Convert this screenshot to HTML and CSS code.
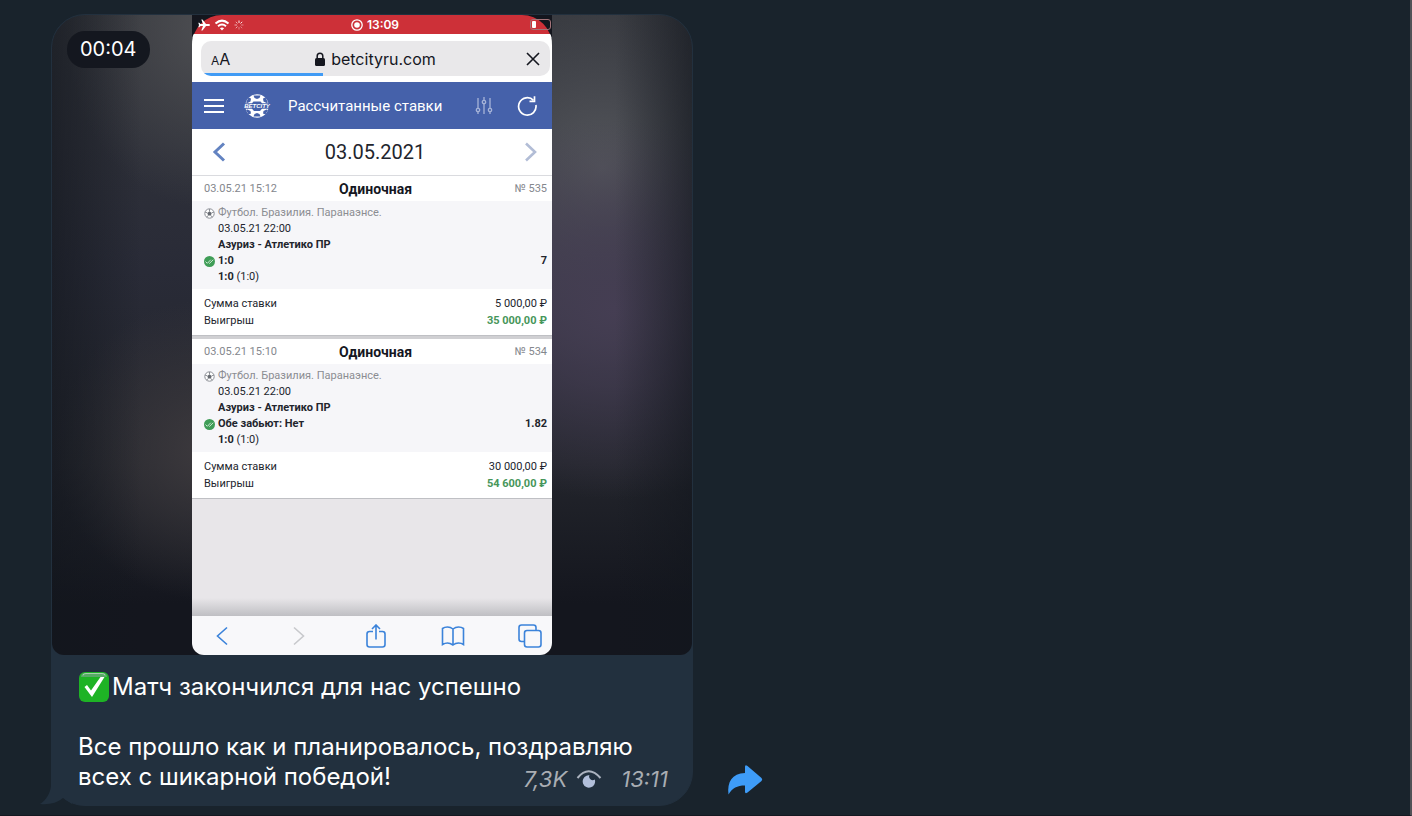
FILE: index.html
```html
<!DOCTYPE html>
<html lang="ru">
<head>
  <meta charset="UTF-8">
  <title>Канал</title>
  <meta name="viewport" content="width=device-width, initial-scale=1.0">
  <link rel="stylesheet" href="styles.css">
</head>
<body>
  <main class="chat">
    <article class="message">
      <svg class="tail" width="32" height="44" viewBox="0 0 32 44"><path d="M11 0V24C10 32 6 38 0 42C9 43 17 41 23 36C26 38 29 40 32 42V0Z"/></svg>

      <div class="media">
        <div class="duration">00:04</div>

        <div class="phone">
          <div class="status-bar">
            <div class="status-left">
              <svg width="12" height="12" viewBox="0 0 12 12" fill="#fff"><path d="M12 6C12 5.300 11.200 5 10.500 5H8L4.500.5H3.300L5 5H2.500L1.300 3.700H.3L1 6 .3 8.300H1.300L2.500 7H5L3.300 11.500H4.500L8 7H10.500C11.200 7 12 6.700 12 6Z"/></svg>
              <svg width="16" height="12" viewBox="0 0 16 12" fill="none" stroke="#fff" stroke-width="2"><path d="M1.500 4.500Q8-1.200 14.500 4.500M4 7.200Q8 3.800 12 7.200"/><path d="M8 11.500 5.900 9.300Q8 7.700 10.100 9.300Z" fill="#fff" stroke="none"/></svg>
              <svg width="10" height="10" viewBox="0 0 10 10" fill="none" stroke="#fff"><path d="M5 .5V3M8.200 1.800 6.500 3.500" opacity=".9"/><path d="M9.500 5H7M8.200 8.200 6.500 6.500M5 9.500V7" opacity=".4"/><path d="M1.800 8.200 3.500 6.500M.5 5H3M1.800 1.800 3.500 3.500" opacity=".6"/></svg>
            </div>
            <div class="status-time">
              <svg width="12" height="12" viewBox="0 0 12 12"><circle cx="6" cy="6" r="5.200" fill="none" stroke="#fff" stroke-width="1.300"/><circle cx="6" cy="6" r="2.800" fill="#fff"/></svg>
              <span>13:09</span>
            </div>
            <svg class="battery" width="22" height="11" viewBox="0 0 22 11"><rect x=".5" y=".5" width="20" height="10" rx="2.500" fill="none" stroke="#a37378"/><rect x="2" y="2" width="4" height="7" rx="1" fill="#fff"/></svg>
          </div>

          <div class="address">
            <div class="address-bar">
              <button class="text-size" aria-label="Размер текста"><small>A</small>A</button>
              <label class="url">
                <svg width="10" height="14" viewBox="0 0 10 14"><path d="M2.200 6V4a2.800 2.800 0 0 1 5.600 0V6" fill="none" stroke="#15171f" stroke-width="1.500"/><rect y="6" width="10" height="8" rx="1.500" fill="#15171f"/></svg>
                <input type="text" value="betcityru.com" aria-label="Адрес">
              </label>
              <button aria-label="Остановить"><svg width="14" height="14" viewBox="0 0 14 14" fill="none" stroke="#15171f" stroke-width="1.600"><path d="M1 1 13 13M13 1 1 13"/></svg></button>
              <div class="progress"></div>
            </div>
          </div>

          <header class="app-header">
            <button aria-label="Меню"><svg width="20" height="16" viewBox="0 0 20 16" stroke="#fff" stroke-width="2"><path d="M0 2H20M0 8H20M0 14H20"/></svg></button>
            <svg class="brand" width="28" height="24" viewBox="0 0 28 24">
              <circle cx="14" cy="12" r="11.700" fill="#fff"/>
              <g fill="#4561aa"><path d="M10.500 1.500H17.500L16.500 4 14 5 11.500 4Z"/><path d="M10.500 22.500H17.500L16.500 20 14 19 11.500 20Z"/><path d="M5.500 3.500 8 4.500 7.500 7.500 4.500 9 3 8.500Z"/><path d="M22.500 3.500 20 4.500 20.500 7.500 23.500 9 25 8.500Z"/><path d="M5.500 20.500 8 19.500 7.500 17 4.500 15.500 3 16Z"/><path d="M22.500 20.500 20 19.500 20.500 17 23.500 15.500 25 16Z"/><path d="M10.500 7.500H17.500L19 9.300H26V14.800H19L17 17H11L9 14.800H2V9.300H9Z"/></g>
              <text x="14" y="14.200" text-anchor="middle">BETCITY</text>
            </svg>
            <h1>Рассчитанные ставки</h1>
            <button aria-label="Фильтр"><svg width="18" height="18" viewBox="0 0 18 18" fill="none" stroke="#a7b4d8" stroke-width="1.300"><path d="M3 1V11M3 15V17M9 0V3M9 7V17M15 1V11M15 15V17"/><circle cx="3" cy="13" r="1.700"/><circle cx="9" cy="5" r="1.700"/><circle cx="15" cy="13" r="1.700"/></svg></button>
            <button aria-label="Обновить"><svg width="20" height="20" viewBox="0 0 20 20" fill="none" stroke="#fff" stroke-width="1.700"><path d="M16.500 4.300A8.700 8.700 0 1 0 18.900 9"/><path d="M12.500 5.300H17.500V.3"/></svg></button>
          </header>

          <div class="date-nav">
            <button aria-label="Предыдущий день"><svg width="14" height="20" viewBox="0 0 14 20" fill="none" stroke="#6383c1" stroke-width="3"><path d="M12 1.500 3 10 12 18.500"/></svg></button>
            <span>03.05.2021</span>
            <button aria-label="Следующий день"><svg width="14" height="20" viewBox="0 0 14 20" fill="none" stroke="#b2bdd6" stroke-width="2.600"><path d="M2 1.500 11 10 2 18.500"/></svg></button>
          </div>

          <section class="bet">
            <div class="bet-head">
              <time>03.05.21 15:12</time>
              <h2>Одиночная</h2>
              <span>№ 535</span>
            </div>
            <div class="bet-body">
              <svg width="11" height="11" viewBox="0 0 11 11"><circle cx="5.500" cy="5.500" r="4.700" fill="#fff" stroke="#8b8e95"/><path d="M5.500 3.300 7.700 4.900 6.900 7.400H4.100L3.300 4.900Z" fill="#666a71"/><path d="M5.500 3.300V1M7.700 4.900 10 4M6.900 7.400 8.300 9.300M4.100 7.400 2.700 9.300M3.300 4.900 1 4" stroke="#8b8e95"/></svg>
              <span class="league">Футбол. Бразилия. Паранаэнсе.</span>
              <span class="line">03.05.21 22:00</span>
              <b class="line">Азуриз - Атлетико ПР</b>
              <svg width="11" height="11" viewBox="0 0 11 11"><circle cx="5.500" cy="5.500" r="5.500" fill="#3f9d57"/><path d="M1.500 5.500 3.300 7.300 6.800 3.700M4.700 6.700 5.500 7.400 9.300 3.700" fill="none" stroke="#c8e6cf"/></svg>
              <b>1:0</b>
              <b class="odds">7</b>
              <span class="line"><b>1:0</b> (1:0)</span>
            </div>
            <dl class="sums">
              <dt>Сумма ставки</dt><dd>5 000,00 ₽</dd>
              <dt>Выигрыш</dt><dd class="win">35 000,00 ₽</dd>
            </dl>
          </section>

          <section class="bet">
            <div class="bet-head">
              <time>03.05.21 15:10</time>
              <h2>Одиночная</h2>
              <span>№ 534</span>
            </div>
            <div class="bet-body">
              <svg width="11" height="11" viewBox="0 0 11 11"><circle cx="5.500" cy="5.500" r="4.700" fill="#fff" stroke="#8b8e95"/><path d="M5.500 3.300 7.700 4.900 6.900 7.400H4.100L3.300 4.900Z" fill="#666a71"/><path d="M5.500 3.300V1M7.700 4.900 10 4M6.900 7.400 8.300 9.300M4.100 7.400 2.700 9.300M3.300 4.900 1 4" stroke="#8b8e95"/></svg>
              <span class="league">Футбол. Бразилия. Паранаэнсе.</span>
              <span class="line">03.05.21 22:00</span>
              <b class="line">Азуриз - Атлетико ПР</b>
              <svg width="11" height="11" viewBox="0 0 11 11"><circle cx="5.500" cy="5.500" r="5.500" fill="#3f9d57"/><path d="M1.500 5.500 3.300 7.300 6.800 3.700M4.700 6.700 5.500 7.400 9.300 3.700" fill="none" stroke="#c8e6cf"/></svg>
              <b>Обе забьют: Нет</b>
              <b class="odds">1.82</b>
              <span class="line"><b>1:0</b> (1:0)</span>
            </div>
            <dl class="sums">
              <dt>Сумма ставки</dt><dd>30 000,00 ₽</dd>
              <dt>Выигрыш</dt><dd class="win">54 600,00 ₽</dd>
            </dl>
          </section>

          <div class="page-end"></div>

          <nav class="toolbar">
            <button aria-label="Назад"><svg width="24" height="24" viewBox="0 0 24 24"><path d="M17 3.500 7.500 12 17 20.500"/></svg></button>
            <button aria-label="Вперёд" disabled><svg width="24" height="24" viewBox="0 0 24 24"><path d="M7 3.500 16.500 12 7 20.500"/></svg></button>
            <button aria-label="Поделиться"><svg width="24" height="24" viewBox="0 0 24 24"><path d="M9 7.500H5.500Q3 7.500 3 10V20.500Q3 23 5.500 23H18.500Q21 23 21 20.500V10Q21 7.500 18.500 7.500H15M12 15.500V1M8 5 12 1 16 5"/></svg></button>
            <button aria-label="Закладки"><svg width="24" height="24" viewBox="0 0 24 24"><path d="M12 5Q9.500 3 6.500 3T1.500 4.500V20.500Q4 19 6.500 19T12 21Q14.500 19 17.500 19T22.500 20.500V4.500Q20.500 3 17.500 3T12 5V21"/></svg></button>
            <button aria-label="Вкладки"><svg width="24" height="24" viewBox="0 0 24 24"><rect x="6.500" y="6.500" width="16.500" height="16.500" rx="2.500"/><path d="M6.500 17.500H3.500Q1 17.500 1 15V3.500Q1 1 3.500 1H15.500Q18 1 18 3.500V6.500"/></svg></button>
          </nav>
        </div>
      </div>

      <div class="caption">
        <p><svg class="check" width="32" height="32" viewBox="0 0 32 32"><rect x="1" y="1" width="30" height="30" rx="6" fill="#1eb325"/><path d="M3 6Q3 2 7 2H25Q29 2 29 6Z" fill="#58a967"/><path d="M5 4.500Q5 2.500 8 2.500H24Q27 2.500 27 4.500" fill="none" stroke="#a6cfac"/><path d="M6.500 16 9 14 13 19.500 22.500 6H26.500L14 26Z" fill="#fff"/></svg>Матч закончился для нас успешно</p>
        <p>Все прошло как и планировалось, поздравляю<br>всех с шикарной победой!</p>
        <div class="meta">
          <span>7,3K</span>
          <svg width="26" height="20" viewBox="0 0 26 20"><path d="M1.500 9Q12.500-4.500 24.500 9" fill="none" stroke="#acb3bf" stroke-width="2"/><path d="M10.500 6.700A6.200 6.200 0 1 0 18.800 10.500 3.600 3.600 0 0 1 13.500 6Z" fill="#b2bfda"/></svg>
          <time>13:11</time>
        </div>
      </div>
    </article>

    <button class="share" aria-label="Переслать"><svg width="36" height="32" viewBox="0 0 36 32"><path d="M1.500 30.500C0 18 5 9.500 18 9V3Q18 0 20.500 2L34.500 14Q36 15.500 34.500 17L20.500 28.500Q18 30.500 18 27.500V21.500C10 21.500 5.500 24 1.500 30.500Z" fill="#3e9cf8"/></svg></button>
  </main>
</body>
</html>
```
FILE: styles.css
```css
* {
  box-sizing: border-box;
}

body {
  margin: 0;
  min-height: 100vh;
  background: #19232c;
  border-right: 2px solid #515156;
  border-bottom: 1px solid #141821;
  font-family: Inter, "Liberation Sans", sans-serif;
  color: #fff;
}

button {
  background: none;
  border: none;
  padding: 0;
  color: inherit;
  font: inherit;
  display: flex;
  align-items: center;
  cursor: pointer;
}

svg {
  display: block;
  flex-shrink: 0;
}

.chat {
  display: flex;
  align-items: flex-end;
  gap: 34px;
  padding: 14px 0 9px 51px;
}

/* message bubble */
.message {
  position: relative;
  width: 642px;
  max-width: 100%;
  background: #22303e;
  border: 1px solid #22303e;
  border-radius: 34px;
}

.tail {
  position: absolute;
  left: -12px;
  bottom: -1px;
  fill: #22303e;
}

.media {
  position: relative;
  display: flex;
  justify-content: center;
  border-radius: 33px 33px 12px 12px;
  overflow: hidden;
  background:
    linear-gradient(90deg, rgba(18, 22, 29, 0.6) 0%, rgba(18, 22, 29, 0) 14%, rgba(18, 22, 29, 0) 88%, rgba(18, 22, 29, 0.6) 100%),
    radial-gradient(ellipse 220px 190px at 88% 46%, #453e53 0%, rgba(69, 62, 83, 0.7) 40%, rgba(69, 62, 83, 0) 100%),
    radial-gradient(ellipse 200px 200px at 86% 24%, #54565b 0%, rgba(84, 86, 91, 0.5) 50%, rgba(84, 86, 91, 0) 100%),
    radial-gradient(ellipse 140px 180px at 24% 2%, #4c4d51 0%, rgba(76, 77, 81, 0) 100%),
    radial-gradient(ellipse 150px 150px at 24% 68%, #3c393d 0%, rgba(60, 57, 61, 0) 100%),
    linear-gradient(#33353b 0%, #292b37 40%, #23252c 70%, #14161e 92%);
}

.duration {
  position: absolute;
  left: 15px;
  top: 16px;
  padding: 0 13px;
  border-radius: 18px;
  background: #14171f;
  font-size: 20px;
  line-height: 37px;
}

/* recorded phone screen */
.phone {
  display: flex;
  flex-direction: column;
  width: 360px;
  height: 640px;
  background: #14161e;
  border-radius: 0 0 12px 12px;
  overflow: hidden;
  font-family: Roboto, "Liberation Sans", sans-serif;
  font-size: 11px;
  color: #22252d;
}

.status-bar {
  position: relative;
  display: grid;
  grid-template-columns: 1fr auto 1fr;
  align-items: center;
  height: 19px;
  padding-left: 6px;
  overflow: hidden;
  color: #fff;
}

/* rounded top of the screen */
.status-bar::before {
  content: "";
  position: absolute;
  inset: 0 0 -20px 0;
  border-radius: 30px 30px 0 0;
  background: #cd3038;
}

.status-bar > * {
  position: relative;
}

.status-left,
.status-time {
  display: flex;
  align-items: center;
  gap: 4px;
}

.status-time {
  font-family: Inter, sans-serif;
  font-size: 12px;
  font-weight: 600;
}

.battery {
  justify-self: end;
}

.address {
  height: 48px;
  padding: 7px 2px 6px 9px;
  border-radius: 2px 2px 0 0 / 11px 11px 0 0;
  background: #fff;
}

.address-bar {
  position: relative;
  display: flex;
  align-items: center;
  justify-content: space-between;
  height: 35px;
  padding: 0 10px;
  border-radius: 10px;
  overflow: hidden;
  background: #e9e8ea;
  font-family: Inter, sans-serif;
  font-size: 16px;
  color: #15171f;
}

.text-size {
  align-items: baseline;
}

.text-size small {
  font-size: 12px;
}

.url {
  display: flex;
  align-items: center;
  gap: 6px;
}

.url input {
  width: 110px;
  padding: 0;
  border: none;
  background: none;
  color: inherit;
  font: inherit;
}

.progress {
  position: absolute;
  left: 0;
  bottom: 0;
  width: 35%;
  height: 3px;
  background: #409bf5;
}

.app-header {
  display: flex;
  align-items: center;
  height: 47px;
  padding: 0 15px 0 12px;
  background: #4561aa;
  color: #fff;
}

.app-header h1 {
  flex: 1;
  margin: 0 0 0 17px;
  font-size: 15px;
  font-weight: 400;
}

.brand {
  margin-left: 19px;
}

.brand text {
  font: italic 700 6px "Liberation Sans", sans-serif;
  fill: #fff;
}

.app-header button:last-child {
  margin-left: 24px;
}

.date-nav {
  display: flex;
  align-items: center;
  justify-content: space-between;
  height: 47px;
  padding: 0 14px 0 20px;
  background: #fff;
  border-bottom: 1px solid #dadbdf;
  font-size: 20px;
}

.bet {
  background: #fff;
  border-bottom: 1px solid #bfc0c4;
}

.bet + .bet {
  border-top: 3px solid #d0d0d3;
}

.bet-head {
  display: grid;
  grid-template-columns: 1fr auto 1fr;
  align-items: center;
  height: 25px;
  padding: 0 5px 0 12px;
  color: #84878d;
}

.bet-head h2 {
  margin: 0;
  font-size: 14px;
  font-weight: 700;
  line-height: 16px;
  color: #15171f;
}

.bet-head span {
  text-align: right;
}

.bet-body {
  display: grid;
  grid-template-columns: 11px 1fr auto;
  column-gap: 3px;
  align-items: center;
  padding: 4px 5px 4px 12px;
  background: #f6f6f9;
  line-height: 16px;
}

.league {
  grid-column: 2 / 4;
  color: #8b8d92;
}

.line {
  grid-column: 2 / 4;
}

.odds {
  text-align: right;
}

.sums {
  display: grid;
  grid-template-columns: 1fr auto;
  margin: 0;
  padding: 6px 5px 6px 12px;
  line-height: 17px;
}

.sums dd {
  margin: 0;
  text-align: right;
}

.sums .win {
  color: #47965a;
  font-weight: 700;
}

.page-end {
  flex: 1;
  background: linear-gradient(rgba(190, 190, 194, 0), #bfbfc3) bottom / 100% 18px no-repeat, #e8e6e9;
}

.toolbar {
  display: flex;
  align-items: center;
  justify-content: space-between;
  height: 39px;
  padding: 0 10px 0 18px;
  background: #f8f8fa;
}

.toolbar svg {
  fill: none;
  stroke: #3b83da;
  stroke-width: 1.6;
}

.toolbar button:disabled svg {
  stroke: #c8c9cc;
}

/* text under the video */
.caption {
  padding: 17px 27px 13px 26px;
  font-size: 24px;
  line-height: 30px;
}

.caption p {
  margin: 0 0 30px;
}

.caption p:last-of-type {
  margin-bottom: 0;
}

.check {
  display: inline-block;
  margin: -1px 2px -1px 0;
  vertical-align: -7px;
}

.meta {
  position: absolute;
  right: 24px;
  bottom: 11px;
  display: flex;
  align-items: center;
  font-size: 22px;
  font-style: italic;
  color: #a9adb3;
}

.meta svg {
  margin: 0 19px 0 9px;
}

.share {
  margin-bottom: 10px;
}
```
